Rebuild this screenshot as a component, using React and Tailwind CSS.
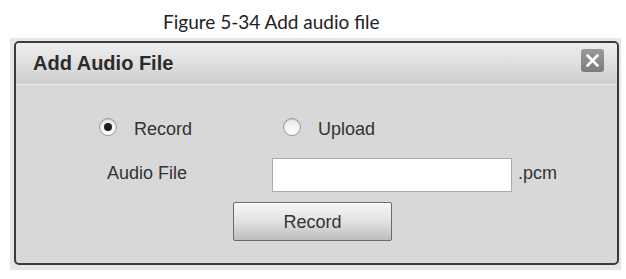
import React from "react";

function Radio({ checked }) {
  return (
    <span className="w-[18px] h-[18px] rounded-full border border-[#9a9a9a] bg-gradient-to-b from-[#e9e9e9] to-white flex items-center justify-center shrink-0 shadow-[inset_0_1px_1px_rgba(0,0,0,0.15)]">
      {checked && <span className="w-[8px] h-[8px] rounded-full bg-[#1e1e1e]" />}
    </span>
  );
}

export default function App() {
  return (
    <div className="w-[626px] h-[279px] bg-white relative overflow-hidden font-['Liberation_Sans',Arial,sans-serif]">
      {/* Caption */}
      <div className="h-[38px] pt-[10px] pl-[163px]">
        <p className="font-['Lato','Open_Sans',sans-serif] text-[19px] leading-[24px] text-[#222]">
          Figure 5-34 Add audio file
        </p>
      </div>

      {/* line of the page behind the dialog */}
      <div className="absolute left-[10px] top-[230px] w-[611px] h-px bg-[#8a8a8a]" />

      {/* Backdrop */}
      <div className="relative ml-[10px] w-[611px] h-[232px] bg-[#e6e6e6] pl-[4px] pt-[3px]">
        <div className="w-[605px] h-[224px] border-2 border-[#3b3b3b] rounded-[5px] bg-[#d8d8d8] overflow-hidden flex flex-col">
          {/* Title bar */}
          <div className="h-[42px] shrink-0 flex justify-between items-start bg-gradient-to-b from-[#eeeeee] to-[#cfcfcf] border-b border-[#ececec]">
            <h1 className="pl-[17px] text-[20px] leading-[41px] font-bold text-[#2b2b2b]">Add Audio File</h1>
            <button className="mt-[6px] mr-[13px] w-[23px] h-[23px] rounded-[3px] bg-gradient-to-b from-[#9a9a9a] to-[#7c7c7c] flex items-center justify-center">
              <svg width="13" height="13" viewBox="0 0 13 13">
                <path d="M1.5 1.5 L11.5 11.5 M11.5 1.5 L1.5 11.5" stroke="white" strokeWidth="2.6" strokeLinecap="round" />
              </svg>
            </button>
          </div>

          {/* Body */}
          <div className="flex-1 pl-[83px] pt-[34px] text-[18px] leading-[20px] text-[#333]">
            <div className="flex items-start">
              <label className="w-[184px] flex items-start gap-[17px]">
                <span className="-mt-[1px]"><Radio checked /></span>
                <span>Record</span>
              </label>
              <label className="flex items-start gap-[17px]">
                <span className="-mt-[1px]"><Radio /></span>
                <span>Upload</span>
              </label>
            </div>

            <div className="flex items-start mt-[19px] h-[34px]">
              <span className="w-[173px] pl-[8px] mt-[5px]">Audio File</span>
              <div className="w-[240px] h-[34px] bg-white border border-[#ababab]" />
              <span className="ml-[6px] mt-[5px]">.pcm</span>
            </div>

            <button className="mt-[10px] ml-[134px] w-[159px] h-[39px] rounded-[2px] border border-[#6a6a6a] bg-gradient-to-b from-[#f7f7f7] via-[#e2e2e2] to-[#bdbdbd] text-[18px] leading-[20px] text-[#333] flex items-center justify-center shadow-[inset_0_1px_0_#fff]">
              Record
            </button>
          </div>
        </div>
      </div>
    </div>
  );
}
